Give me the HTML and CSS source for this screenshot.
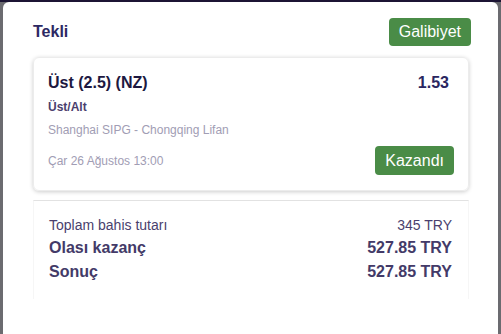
FILE: index.html
```html
<!DOCTYPE html>
<html lang="tr">
<head>
<meta charset="utf-8">
<link rel="stylesheet" href="styles.css">
</head>
<body>
<div class="modal">
  <div class="header">
    <span class="title">Tekli</span>
    <span class="badge">Galibiyet</span>
  </div>
  <div class="card">
    <div class="row-top">
      <span class="pick">Üst (2.5) (NZ)</span>
      <span class="odds">1.53</span>
    </div>
    <div class="market">Üst/Alt</div>
    <div class="match">Shanghai SIPG - Chongqing Lifan</div>
    <div class="row-bottom">
      <span class="date">Çar 26 Ağustos 13:00</span>
      <span class="badge">Kazandı</span>
    </div>
  </div>
  <div class="summary">
    <div class="line small"><span>Toplam bahis tutarı</span><span>345 TRY</span></div>
    <div class="line big"><span>Olası kazanç</span><span>527.85 TRY</span></div>
    <div class="line big"><span>Sonuç</span><span>527.85 TRY</span></div>
  </div>
</div>
</body>
</html>
```

FILE: styles.css
```css
html, body {
  margin: 0;
  height: 100%;
}
body {
  background: #6b6b70;
  border-top: 2px solid #1c1434;
  box-sizing: border-box;
  font-family: "Liberation Sans", Arial, sans-serif;
  overflow: hidden;
}
.modal {
  margin: 0 3px 0 3px;
  height: 100%;
  background: #fff;
  border-radius: 6px 6px 0 0;
  padding: 16px 29px 0 30px;
  box-sizing: border-box;
}
.header {
  display: flex;
  justify-content: space-between;
  align-items: center;
  margin-right: -2px;
  height: 28px;
}
.title {
  font-size: 16px;
  font-weight: bold;
  color: #2c2863;
}
.badge {
  background: #4a8c47;
  color: #fff;
  font-size: 16px;
  border-radius: 4px;
  height: 28px;
  line-height: 28px;
  padding: 0 10px;
}
.card {
  margin-top: 11px;
  border: 1px solid #ececec;
  border-radius: 6px;
  box-shadow: 0 1px 4px rgba(0, 0, 0, 0.2);
  padding: 15px 14px 15px 14px;
}
.row-top {
  display: flex;
  justify-content: space-between;
  align-items: center;
  height: 20px;
  padding-right: 5px;
}
.pick, .odds {
  font-size: 16px;
  font-weight: bold;
  color: #1d1840;
}
.odds { color: #2a2660; }
.market {
  margin-top: 5px;
  font-size: 12px;
  font-weight: bold;
  color: #4b3f6e;
  line-height: 18px;
}
.match {
  margin-top: 6px;
  font-size: 12px;
  color: #a19db4;
  line-height: 16px;
}
.row-bottom {
  margin-top: 8px;
  display: flex;
  justify-content: space-between;
  align-items: center;
}
.date {
  font-size: 12px;
  color: #a19db4;
}
.row-bottom .badge { height: 29px; line-height: 29px; }
.summary {
  margin-top: 9px;
  border-top: 1px solid #e2e2e2;
  border-left: 1px solid #f6f6f6;
  border-right: 1px solid #f6f6f6;
  padding: 13px 16px 20px 15px;
  height: 65px;
}
.line {
  display: flex;
  justify-content: space-between;
  color: #4a3f6e;
}
.small {
  font-size: 14px;
  line-height: 22px;
}
.big {
  font-size: 16px;
  font-weight: bold;
  line-height: 24px;
  color: #433a68;
}
```
